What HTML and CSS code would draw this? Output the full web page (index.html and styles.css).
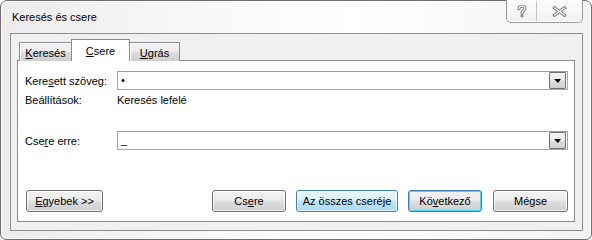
FILE: index.html
```html
<html>
<head>
    <title>Keresés és csere</title>
    <link rel="stylesheet" href="styles.css">
</head>
<body>
    <div class="window">
        <div class="titlebar">
            <span class="title">Keresés és csere</span>
            <div class="caption-buttons">
                <span class="cap-btn help">
                    <svg width="10" height="13" viewBox="0 0 10 13">
                        <path d="M2 3.8 C2 2 3.3 1.2 5 1.2 C6.7 1.2 8 2.1 8 3.6 C8 5.4 5.4 5.6 5 7.6 L5 8.2" fill="none" stroke="#777" stroke-width="3" stroke-linecap="round"/>
                        <circle cx="5" cy="11" r="1.6" fill="#777"/>
                        <path d="M2 3.8 C2 2 3.3 1.2 5 1.2 C6.7 1.2 8 2.1 8 3.6 C8 5.4 5.4 5.6 5 7.6 L5 8.2" fill="none" stroke="#fff" stroke-width="1.2" stroke-linecap="round"/>
                        <circle cx="5" cy="11" r="0.6" fill="#fff"/>
                    </svg>
                </span>
                <span class="cap-btn close">
                    <svg width="15" height="11" viewBox="0 0 15 11">
                        <path d="M2.5 1.8 L12.5 9.2 M12.5 1.8 L2.5 9.2" stroke="#777" stroke-width="3.2" stroke-linecap="square"/>
                        <path d="M2.5 1.8 L12.5 9.2 M12.5 1.8 L2.5 9.2" stroke="#fff" stroke-width="1.2" stroke-linecap="square"/>
                    </svg>
                </span>
            </div>
        </div>

        <div class="client">
            <div class="tabs">
                <div class="tab tab-find"><u>K</u>eresés</div>
                <div class="tab tab-replace active"><u>C</u>sere</div>
                <div class="tab tab-goto"><u>U</u>grás</div>
            </div>

            <div class="panel">
                <div class="form">
                    <span class="label">Kere<u>s</u>ett szöveg:</span>
                    <div class="combo">
                        <span class="value">&bull;</span>
                        <span class="drop"><span class="arrow"></span></span>
                    </div>

                    <span class="label">Beállítások:</span>
                    <span class="options">Keresés lefelé</span>

                    <span class="label replace-row">Cse<u>r</u>e erre:</span>
                    <div class="combo replace-row">
                        <span class="value">_</span>
                        <span class="drop"><span class="arrow"></span></span>
                    </div>
                </div>

                <div class="buttons">
                    <button class="btn btn-more"><u>E</u>gyebek &gt;&gt;</button>
                    <div class="spacer"></div>
                    <button class="btn btn-replace">Cs<u>e</u>re</button>
                    <button class="btn btn-all hot">Az összes cseré<u>j</u>e</button>
                    <button class="btn btn-next focus">Kö<u>v</u>etkező</button>
                    <button class="btn btn-cancel">Mégse</button>
                </div>
            </div>
        </div>
    </div>
</body>
</html>
```

FILE: styles.css
```css
body {
    margin: 0;
    width: 592px;
    height: 240px;
    background-color: #ffffff;
    font-family: "Liberation Sans", Arial, sans-serif;
    font-size: 11px;
    color: #000;
}

.window {
    box-sizing: border-box;
    width: 592px;
    height: 240px;
    border: 1px solid #6f6f6f;
    border-radius: 7px 7px 6px 6px;
    background: linear-gradient(to right, #ececec 0%, #f7f7f7 30%, #ffffff 60%, #f3f3f3 100%);
    box-shadow: inset 0 0 0 1px #ffffff;
    display: flex;
    flex-direction: column;
}

.titlebar {
    height: 31px;
    display: flex;
    align-items: flex-start;
    justify-content: space-between;
}

.title {
    margin: 10px 0 0 11px;
    font-size: 11px;
    color: #000;
}

.caption-buttons {
    display: flex;
    margin: -1px 8px 0 0;
    height: 23px;
    box-sizing: border-box;
    border: 1px solid #9a9a9a;
    border-top: none;
    border-radius: 0 0 5px 5px;
    background: linear-gradient(#fdfdfd, #f0f0f0);
    box-shadow: inset 0 -1px 0 #ffffff;
}

.cap-btn {
    display: flex;
    align-items: center;
    justify-content: center;
    height: 20px;
    margin-top: 1px;
}

.help {
    width: 29px;
    border-right: 1px solid #c4c4c4;
}

.close {
    width: 45px;
}

.client {
    flex: 1;
    margin: 1px 8px 8px 9px;
    border: 1px solid #8e8f8f;
    background-color: #f0f0f0;
    padding: 6px 7px 8px 6px;
    display: flex;
    flex-direction: column;
}

.tabs {
    display: flex;
    align-items: flex-end;
    height: 21px;
    padding-left: 2px;
    margin-bottom: -1px;
    position: relative;
    z-index: 1;
}

.tab {
    box-sizing: border-box;
    height: 19px;
    border: 1px solid #898c95;
    border-bottom: none;
    background: linear-gradient(#f2f2f2 0%, #ebebeb 50%, #dddddd 51%, #cfcfcf 100%);
    box-shadow: inset 1px 1px 0 #ffffff;
    display: flex;
    align-items: center;
    justify-content: center;
    padding-top: 2px;
}

.tab-find {
    width: 53px;
}

.tab-replace {
    width: 59px;
    margin-left: -1px;
}

.tab-goto {
    width: 51px;
    margin-left: -1px;
}

.tab.active {
    height: 22px;
    background: #ffffff;
    box-shadow: none;
    position: relative;
    z-index: 2;
    padding-top: 0;
}

.panel {
    flex: 1;
    border: 1px solid #898c95;
    background-color: #ffffff;
    padding: 10px 6px 9px 7px;
    display: flex;
    flex-direction: column;
}

.form {
    display: grid;
    grid-template-columns: 92px 1fr;
    grid-template-rows: 19px 20px 21px 19px;
    align-items: center;
}

.replace-row {
    grid-row: 4;
}

.combo {
    box-sizing: border-box;
    height: 19px;
    border: 1px solid #a5a7ad;
    border-top-color: #9a9ca2;
    display: flex;
    align-items: center;
    justify-content: space-between;
    padding-right: 1px;
}

.value {
    padding-left: 3px;
    line-height: 15px;
}

.drop {
    box-sizing: border-box;
    width: 17px;
    height: 17px;
    border: 1px solid #707070;
    border-radius: 1px;
    background: linear-gradient(#f2f2f2 0%, #ebebeb 50%, #dddddd 51%, #cfcfcf 100%);
    display: flex;
    align-items: center;
    justify-content: center;
}

.arrow {
    width: 0;
    height: 0;
    border-left: 4px solid transparent;
    border-right: 3px solid transparent;
    border-top: 4px solid #000;
}

.buttons {
    display: flex;
    margin-top: 40px;
    gap: 10px;
}

.spacer {
    flex: 1;
}

.btn {
    box-sizing: border-box;
    height: 22px;
    padding: 0;
    border: 1px solid #707070;
    border-radius: 3px;
    background: linear-gradient(#f2f2f2 0%, #ebebeb 50%, #dddddd 51%, #cfcfcf 100%);
    box-shadow: inset 0 0 0 1px rgba(255, 255, 255, 0.75);
    font-family: "Liberation Sans", Arial, sans-serif;
    font-size: 11px;
    color: #000;
}

.btn-more {
    width: 77px;
    margin-left: 1px;
}

.btn-replace {
    width: 74px;
}

.btn-all {
    width: 102px;
}

.btn-next {
    width: 74px;
}

.btn-cancel {
    width: 75px;
    margin-left: 1px;
}

.btn.hot {
    border-color: #3c7fb1;
    background: linear-gradient(#eaf6fd 0%, #d9f0fc 50%, #bee6fd 51%, #a7d9f5 100%);
}

.btn.focus {
    border-color: #3c7fb1;
    box-shadow: inset 0 0 0 1px #48d8fb;
}
```
